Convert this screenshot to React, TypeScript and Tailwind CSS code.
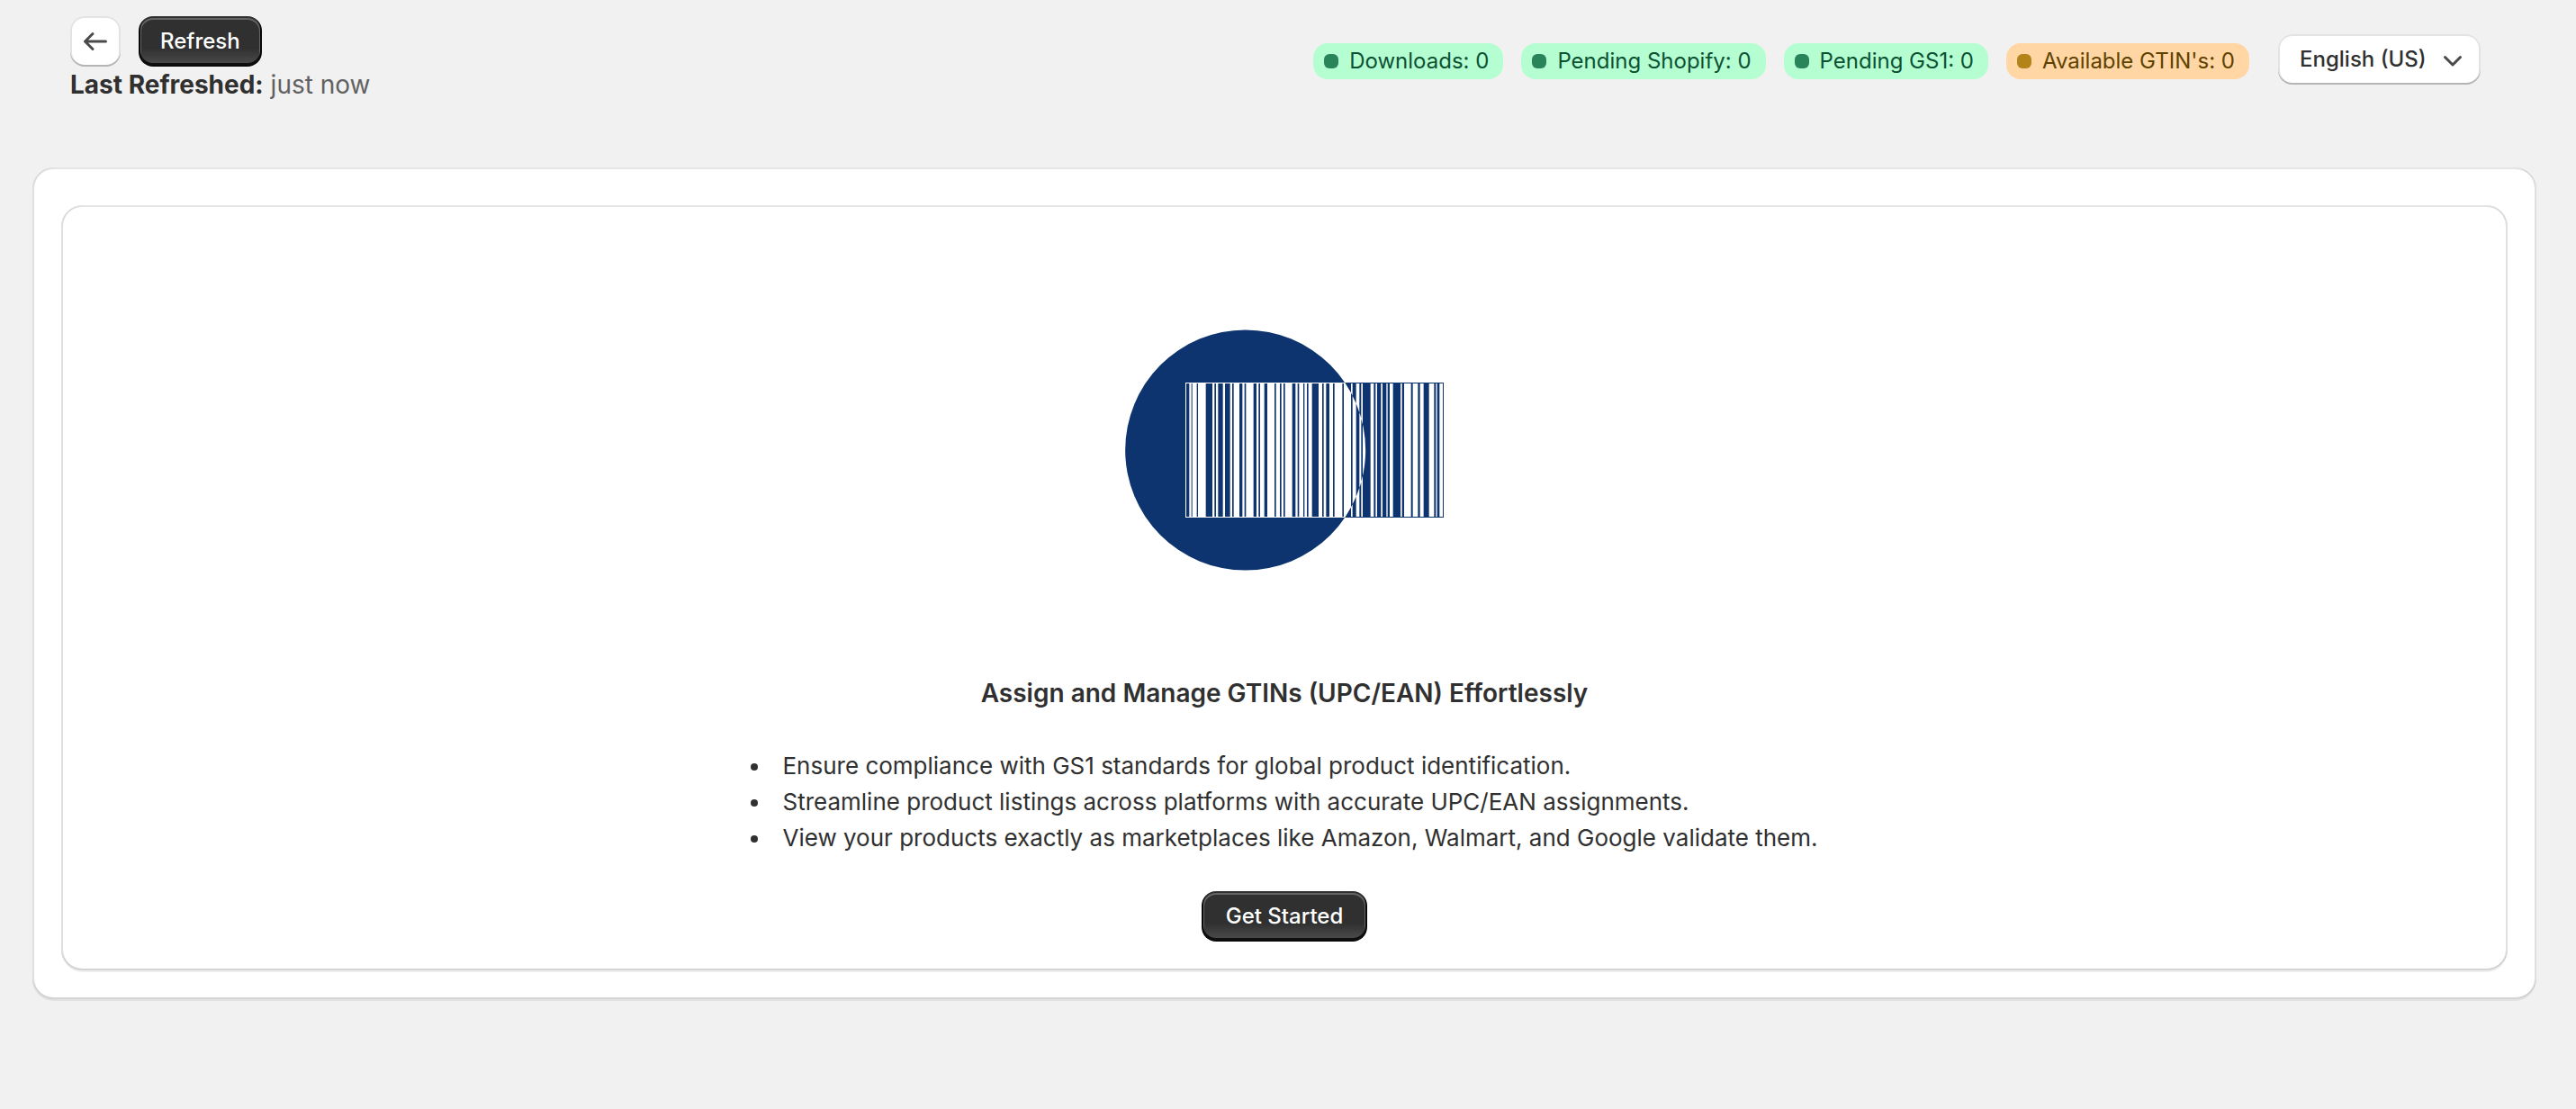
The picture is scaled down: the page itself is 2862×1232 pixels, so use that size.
import React from "react";

const primaryButton =
  "flex h-14 items-center justify-center rounded-[16px] bg-[#303030] bg-[linear-gradient(180deg,rgba(48,48,48,0)_63%,rgba(255,255,255,0.15)_100%)] text-2xl leading-8 font-[550] text-white shadow-[inset_0_-2px_0_2px_rgba(0,0,0,0.8),inset_0_0_0_2px_#303030,inset_0_1px_0_3px_rgba(255,255,255,0.25)]";

const lightButton =
  "h-14 rounded-[16px] bg-white shadow-[inset_0_-2px_0_#b5b5b5,inset_0_0_0_2px_#e3e3e3]";

const cardSurface =
  "rounded-[24px] bg-white shadow-[0_2px_0_rgba(26,26,26,0.07),inset_2px_0_0_rgba(204,204,204,0.6),inset_-2px_0_0_rgba(204,204,204,0.6),inset_0_-2px_0_rgba(0,0,0,0.17),inset_0_2px_0_rgba(204,204,204,0.5)]";

type Tone = "success" | "warning";

const badges: { label: string; tone: Tone }[] = [
  { label: "Downloads: 0", tone: "success" },
  { label: "Pending Shopify: 0", tone: "success" },
  { label: "Pending GS1: 0", tone: "success" },
  { label: "Available GTIN's: 0", tone: "warning" },
];

const toneStyles: Record<Tone, { box: string; dot: string }> = {
  success: { box: "bg-[#b4fed2] text-[#0c5132]", dot: "bg-[#29845a]" },
  warning: { box: "bg-[#ffd6a4] text-[#5e4200]", dot: "bg-[#b28419]" },
};

function Badge({ label, tone }: { label: string; tone: Tone }) {
  const styles = toneStyles[tone];
  return (
    <span
      className={`flex h-10 items-center gap-3 rounded-[16px] pr-4 pl-3 text-2xl leading-8 whitespace-nowrap ${styles.box}`}
    >
      <span className={`size-4 rounded-[6px] ${styles.dot}`} />
      {label}
    </span>
  );
}

// Inked bars of the barcode as [left, right]; overlap with the disc is knocked out.
const bars: [number, number][] = [
  [244, 251], [254, 269], [273, 299], [321, 328], [333, 340], [356, 363],
  [380, 387], [392, 411], [421, 428], [433, 458], [468, 475], [480, 494],
  [504, 528], [533, 546], [551, 558], [563, 587], [598, 605], [610, 624],
  [628, 636], [641, 653], [675, 687], [692, 700], [711, 723], [728, 754],
  [759, 783], [788, 800], [811, 817], [822, 848], [859, 865], [870, 883],
  [888, 901], [905, 912], [923, 948], [953, 960], [983, 989], [1006, 1013],
  [1025, 1043], [1060, 1066], [1070, 1078],
];

function BarcodeLogo() {
  const disc = "M30.5 450a400.5 400.5 0 1 0 801 0a400.5 400.5 0 1 0-801 0z";
  const frame = "M231 225H1092V675H231zM234 228V672H1089V228z";
  const ink = bars.map(([l, r]) => `M${l} 228H${r}V672H${l}z`).join("");
  return (
    <svg viewBox="30 48 1062 804" className="h-[268px] w-[354px]" role="img" aria-label="Barcode">
      <path d={disc + frame + ink} fill="#0d346e" fillRule="evenodd" />
    </svg>
  );
}

export default function App() {
  return (
    <div className="min-h-screen bg-[#f1f1f1] pt-[18px] pr-11 pb-20 pl-9 font-['Inter',sans-serif] text-[#303030]">
      <header className="flex items-center justify-between pr-[62px] pl-[42px]">
        <div>
          <div className="flex gap-5">
            <button type="button" aria-label="Back" className={`${lightButton} flex w-14 items-center justify-center`}>
              <svg viewBox="0 0 40 40" className="size-10" fill="none" stroke="#4a4a4a" strokeWidth="3" strokeLinecap="round" strokeLinejoin="round">
                <path d="M31.5 20H8.5M17 11.5L8.5 20L17 28.5" />
              </svg>
            </button>
            <button type="button" className={`${primaryButton} px-6`}>Refresh</button>
          </div>
          <p className="text-[28px] leading-10 text-[#616161]">
            <strong className="font-[650] text-[#303030]">Last Refreshed:</strong> just now
          </p>
        </div>
        <div className="flex items-center gap-8">
          <div className="flex gap-5 pt-1">
            {badges.map((badge) => (
              <Badge key={badge.label} {...badge} />
            ))}
          </div>
          <div className="relative">
            <select
              aria-label="Language"
              className={`${lightButton} block appearance-none pr-[60px] pl-6 text-2xl leading-8 font-[550] text-[#303030]`}
            >
              <option>English (US)</option>
            </select>
            <svg viewBox="0 0 40 40" className="pointer-events-none absolute top-2 right-3 size-10" fill="none" stroke="#4a4a4a" strokeWidth="3" strokeLinecap="round" strokeLinejoin="round">
              <path d="M12.5 17.5L21 26L29.5 17.5" />
            </svg>
          </div>
        </div>
      </header>

      <main className={`${cardSurface} mt-[72px] px-8 pt-[42px] pb-8`}>
        <section className={`${cardSurface} flex flex-col items-center px-8 pt-[138px] pb-8`}>
          <BarcodeLogo />
          <h1 className="mt-[116px] text-[28px] leading-10 font-[630]">
            Assign and Manage GTINs (UPC/EAN) Effortlessly
          </h1>
          <ul className="mt-[41px] mb-[39px] list-inside list-disc text-[26px] leading-10">
            <li>Ensure compliance with GS1 standards for global product identification.</li>
            <li>Streamline product listings across platforms with accurate UPC/EAN assignments.</li>
            <li>View your products exactly as marketplaces like Amazon, Walmart, and Google validate them.</li>
          </ul>
          <button type="button" className={`${primaryButton} px-[27px]`}>Get Started</button>
        </section>
      </main>
    </div>
  );
}
